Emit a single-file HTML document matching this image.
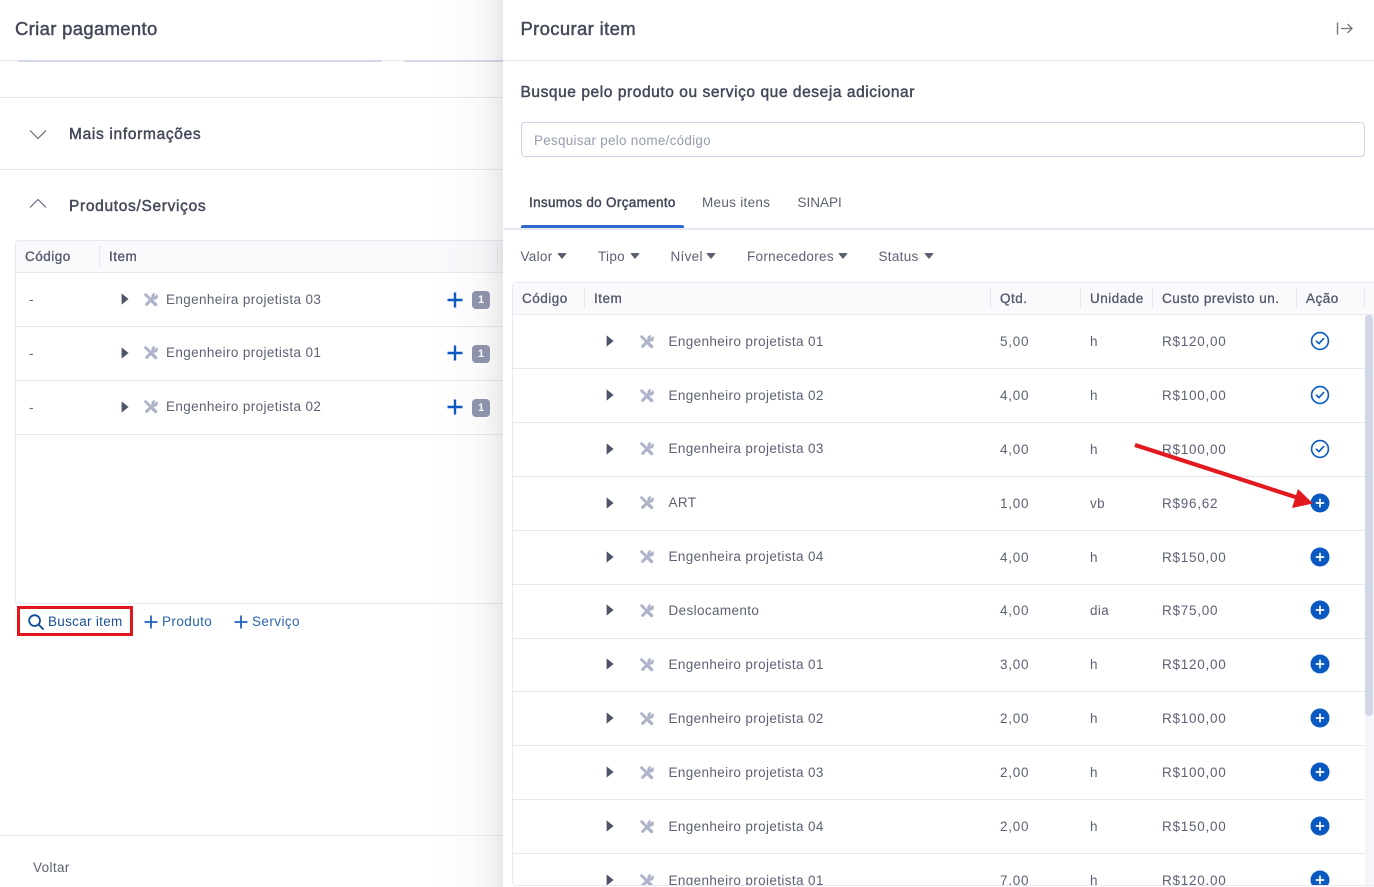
<!DOCTYPE html>
<html lang="pt-BR">
<head>
<meta charset="utf-8">
<title>Procurar item</title>
<style>
html,body{margin:0;padding:0;width:1374px;height:887px;overflow:hidden;background:#fff}
body{position:relative;font-family:"Liberation Sans",Arial,sans-serif;color:#5a6072}
.a{position:absolute}
.t{position:absolute;white-space:nowrap;line-height:16px;font-size:13.5px;letter-spacing:.37px;color:#5c6274;transform:translateY(1px)}
.n{letter-spacing:.75px}
.h{position:absolute;white-space:nowrap;line-height:16px;font-size:13.5px;letter-spacing:.5px;color:#555b6d;-webkit-text-stroke:.35px #555b6d;transform:translateY(1px)}
.m{position:absolute;white-space:nowrap;line-height:20px;color:#434859;-webkit-text-stroke:.45px #434859;transform:translateY(1px)}
.l{position:absolute;height:1px;background:#e6e9f4}
.v{position:absolute;width:1px;background:#e8eaf2}
.f{position:absolute;white-space:nowrap;line-height:16px;font-size:13.5px;letter-spacing:.3px;color:#5c6274}
.c{position:absolute;width:0;height:0;border-left:5.5px solid transparent;border-right:5.5px solid transparent;border-top:6px solid #5a6072;border-radius:2px}
svg{position:absolute;display:block}
</style>
</head>
<body>
<svg width="0" height="0" style="position:absolute">
<defs>
<symbol id="tri" viewBox="0 0 8 12"><path d="M0.6 0.4 L7.6 6 L0.6 11.6 Z" fill="#4f5568"/></symbol>
<symbol id="tool" viewBox="0 0 14 14"><g fill="none" stroke="#adb3c9" stroke-linecap="round"><path d="M2.6 11.4 L9 5" stroke-width="3"/><path d="M1.6 1.6 L5.4 5.4" stroke-width="2.8"/><path d="M7.6 7.6 L11.6 11.6" stroke-width="3.4"/></g><circle cx="10.6" cy="3.4" r="3.3" fill="#adb3c9"/><path d="M10.4 3.6 L13 1 L14.4 -.4 L11.2 -.4 Z" fill="#fff"/></symbol>
<symbol id="ok" viewBox="0 0 20 20"><circle cx="10" cy="10" r="8.4" fill="#fff" stroke="#0a59c0" stroke-width="1.6"/><path d="M6.4 10.2 L9 12.6 L13.6 7.6" fill="none" stroke="#0a59c0" stroke-width="1.6" stroke-linecap="round" stroke-linejoin="round"/></symbol>
<symbol id="add" viewBox="0 0 20 20"><circle cx="10" cy="10" r="9.5" fill="#0a59c0"/><path d="M10 6.4 V13.6 M6.4 10 H13.6" stroke="#fff" stroke-width="1.7" stroke-linecap="round"/></symbol>
<symbol id="plus" viewBox="0 0 16 16"><path d="M8 .5 V15.5 M.5 8 H15.5" stroke="#0a59c0" stroke-width="2.4" fill="none"/></symbol>
<symbol id="plus2" viewBox="0 0 14 14"><path d="M7 .5 V13.5 M.5 7 H13.5" stroke="#1f63bd" stroke-width="1.8" fill="none"/></symbol>
</defs>
</svg>

<!-- LEFT PANEL -->
<div class="m" style="left:15px;top:18px;font-size:18.5px;letter-spacing:.32px">Criar pagamento</div>
<div class="l" style="left:0;top:60px;width:503px;background:#e8eaf2"></div>
<div class="a" style="left:17px;top:60px;width:365px;height:2px;background:#d3d8e8;border-radius:0 0 4px 4px"></div>
<div class="a" style="left:404px;top:60px;width:99px;height:2px;background:#d3d8e8"></div>
<div class="l" style="left:0;top:97px;width:503px;background:#e8e9f0"></div>
<div class="l" style="left:0;top:169px;width:503px;background:#e8e9f0"></div>
<svg style="left:29px;top:129px" width="18" height="11" viewBox="0 0 18 11"><path d="M1 1.5 L9 9.5 L17 1.5" fill="none" stroke="#5c6274" stroke-width="1.1"/></svg>
<div class="m" style="left:69px;top:124px;font-size:15.5px;letter-spacing:.68px">Mais informações</div>
<svg style="left:29px;top:198px" width="18" height="11" viewBox="0 0 18 11"><path d="M1 9.5 L9 1.5 L17 9.5" fill="none" stroke="#5c6274" stroke-width="1.1"/></svg>
<div class="m" style="left:69px;top:196px;font-size:15.5px;letter-spacing:.68px">Produtos/Serviços</div>

<div class="a" style="left:15px;top:240px;width:488px;background:#fafafd;border-top:1px solid #e6e9f4;border-bottom:1px solid #e6e9f4;border-left:1px solid #e6e9f4;border-radius:4px 0 0 0;box-sizing:content-box;height:31px"></div>
<div class="a" style="left:15px;top:272px;width:1px;height:332px;background:#e6e9f4"></div>
<div class="v" style="left:99px;top:245px;height:22px"></div>
<div class="v" style="left:497px;top:245px;height:22px"></div>
<div class="h" style="left:25px;top:248px">Código</div>
<div class="h" style="left:109px;top:248px">Item</div>
<div class="l" style="left:15px;top:326px;width:488px"></div>
<div class="l" style="left:15px;top:380px;width:488px"></div>
<div class="l" style="left:15px;top:434px;width:488px"></div>
<div class="l" style="left:15px;top:603px;width:488px"></div>

<div class="t" style="left:29px;top:291px">-</div>
<svg style="left:121px;top:293px" width="8" height="12"><use href="#tri"/></svg>
<svg style="left:144px;top:293px" width="14" height="14"><use href="#tool"/></svg>
<div class="t" style="left:166px;top:291px">Engenheira projetista 03</div>
<svg style="left:446.5px;top:292px" width="16" height="16"><use href="#plus"/></svg>
<div class="a" style="left:472px;top:291px;width:18px;height:18px;background:#8e94ad;border-radius:4px;color:#fff;font-size:11px;font-weight:bold;line-height:18px;text-align:center">1</div>

<div class="t" style="left:29px;top:345px">-</div>
<svg style="left:121px;top:347px" width="8" height="12"><use href="#tri"/></svg>
<svg style="left:144px;top:346px" width="14" height="14"><use href="#tool"/></svg>
<div class="t" style="left:166px;top:344px">Engenheiro projetista 01</div>
<svg style="left:446.5px;top:345px" width="16" height="16"><use href="#plus"/></svg>
<div class="a" style="left:472px;top:345px;width:18px;height:18px;background:#8e94ad;border-radius:4px;color:#fff;font-size:11px;font-weight:bold;line-height:18px;text-align:center">1</div>

<div class="t" style="left:29px;top:399px">-</div>
<svg style="left:121px;top:401px" width="8" height="12"><use href="#tri"/></svg>
<svg style="left:144px;top:400px" width="14" height="14"><use href="#tool"/></svg>
<div class="t" style="left:166px;top:398px">Engenheiro projetista 02</div>
<svg style="left:446.5px;top:399px" width="16" height="16"><use href="#plus"/></svg>
<div class="a" style="left:472px;top:399px;width:18px;height:18px;background:#8e94ad;border-radius:4px;color:#fff;font-size:11px;font-weight:bold;line-height:18px;text-align:center">1</div>

<div class="a" style="left:17px;top:606px;width:116px;height:30px;border:3.5px solid #e2141c;box-sizing:border-box"></div>
<svg style="left:28px;top:614px" width="16" height="16" viewBox="0 0 16 16"><circle cx="6.6" cy="6.6" r="5.4" fill="none" stroke="#0f4c9c" stroke-width="1.8"/><path d="M10.6 10.6 L15 15" stroke="#0f4c9c" stroke-width="1.9" stroke-linecap="round"/></svg>
<div class="t" style="left:48px;top:613px;color:#1c4f97;letter-spacing:.3px">Buscar item</div>
<svg style="left:144px;top:615px" width="14" height="14"><use href="#plus2"/></svg>
<div class="t" style="left:162px;top:613px;color:#2b63ad;letter-spacing:.42px">Produto</div>
<svg style="left:234px;top:615px" width="14" height="14"><use href="#plus2"/></svg>
<div class="t" style="left:252px;top:613px;color:#2b63ad;letter-spacing:.42px">Serviço</div>

<div class="l" style="left:0;top:835px;width:503px;background:#ececf0"></div>
<div class="t" style="left:33px;top:859px;color:#5c6274">Voltar</div>

<!-- panel shadow -->
<div class="a" style="left:433px;top:0;width:70px;height:887px;background:linear-gradient(to right,rgba(120,120,125,0),rgba(120,120,125,.02) 40%,rgba(120,120,125,.06) 75%,rgba(120,120,125,.17))"></div>

<!-- RIGHT PANEL -->
<div class="a" style="left:503px;top:0;width:871px;height:887px;background:#fff"></div>
<div class="m" style="left:520.5px;top:18px;font-size:18.5px;letter-spacing:.34px">Procurar item</div>
<svg style="left:1336px;top:21px" width="18" height="15" viewBox="0 0 18 15"><path d="M1.5 1.5 V13.5" stroke="#75787f" stroke-width="1.4" fill="none"/><path d="M5 7.5 H16 M11.5 3 L16 7.5 L11.5 12" stroke="#75787f" stroke-width="1.3" fill="none"/></svg>
<div class="l" style="left:503px;top:60px;width:871px;background:#e6e9f4"></div>

<div class="m" style="left:520.5px;top:82px;font-size:15.5px;letter-spacing:.57px">Busque pelo produto ou serviço que deseja adicionar</div>
<div class="a" style="left:521px;top:122px;width:844px;height:35px;border:1px solid #cdd3e6;border-radius:4px;box-sizing:border-box"></div>
<div class="t" style="left:534px;top:132px;color:#959bb2;font-size:13.5px;letter-spacing:.25px">Pesquisar pelo nome/código</div>

<div class="h" style="left:529px;top:194px;color:#3f4456;-webkit-text-stroke:.4px #3f4456;letter-spacing:.32px">Insumos do Orçamento</div>
<div class="f" style="left:702px;top:195px">Meus itens</div>
<div class="f" style="left:797.5px;top:195px;letter-spacing:0">SINAPI</div>
<div class="a" style="left:503px;top:228px;width:871px;height:2px;background:#e6e9f4"></div>
<div class="a" style="left:521px;top:225px;width:163px;height:3px;background:#2e6bd0;border-radius:2px 2px 0 0"></div>

<div class="f" style="left:520.5px;top:249px">Valor</div><div class="c" style="left:557px;top:253px"></div>
<div class="f" style="left:598px;top:249px">Tipo</div><div class="c" style="left:630px;top:253px"></div>
<div class="f" style="left:670.5px;top:249px">Nível</div><div class="c" style="left:706px;top:253px"></div>
<div class="f" style="left:747px;top:249px">Fornecedores</div><div class="c" style="left:838px;top:253px"></div>
<div class="f" style="left:878.5px;top:249px">Status</div><div class="c" style="left:924px;top:253px"></div>

<!-- table -->
<div class="a" style="left:512px;top:282px;width:862px;height:604px;border:1px solid #e6e9f4;border-right:0;border-radius:4px 0 0 4px;box-sizing:border-box"></div>
<div class="a" style="left:513px;top:283px;width:861px;height:31px;background:#fafafd"></div>
<div class="l" style="left:513px;top:314px;width:861px;height:1px"></div>
<div class="v" style="left:584px;top:288px;height:21px"></div>
<div class="v" style="left:990px;top:288px;height:21px"></div>
<div class="v" style="left:1080px;top:288px;height:21px"></div>
<div class="v" style="left:1152px;top:288px;height:21px"></div>
<div class="v" style="left:1296px;top:288px;height:21px"></div>
<div class="v" style="left:1364px;top:288px;height:21px"></div>
<div class="h" style="left:522px;top:290px">Código</div>
<div class="h" style="left:594px;top:290px">Item</div>
<div class="h" style="left:1000px;top:290px">Qtd.</div>
<div class="h" style="left:1090px;top:290px">Unidade</div>
<div class="h" style="left:1162px;top:290px;letter-spacing:.48px">Custo previsto un.</div>
<div class="h" style="left:1306px;top:290px">Ação</div>

<div class="l" style="left:513px;top:368px;width:852px"></div>
<div class="l" style="left:513px;top:422px;width:852px"></div>
<div class="l" style="left:513px;top:476px;width:852px"></div>
<div class="l" style="left:513px;top:530px;width:852px"></div>
<div class="l" style="left:513px;top:584px;width:852px"></div>
<div class="l" style="left:513px;top:638px;width:852px"></div>
<div class="l" style="left:513px;top:691px;width:852px"></div>
<div class="l" style="left:513px;top:745px;width:852px"></div>
<div class="l" style="left:513px;top:799px;width:852px"></div>
<div class="l" style="left:513px;top:853px;width:852px"></div>

<!-- rows -->
<svg style="left:606px;top:335px" width="8" height="12"><use href="#tri"/></svg><svg style="left:640px;top:335px" width="14" height="14"><use href="#tool"/></svg>
<div class="t" style="left:668.5px;top:333px">Engenheiro projetista 01</div><div class="t n" style="left:1000px;top:333px">5,00</div><div class="t" style="left:1090px;top:333px">h</div><div class="t n" style="left:1162px;top:333px">R$120,00</div>
<svg style="left:1310px;top:331px" width="20" height="20"><use href="#ok"/></svg>

<svg style="left:606px;top:389px" width="8" height="12"><use href="#tri"/></svg><svg style="left:640px;top:389px" width="14" height="14"><use href="#tool"/></svg>
<div class="t" style="left:668.5px;top:387px">Engenheiro projetista 02</div><div class="t n" style="left:1000px;top:387px">4,00</div><div class="t" style="left:1090px;top:387px">h</div><div class="t n" style="left:1162px;top:387px">R$100,00</div>
<svg style="left:1310px;top:385px" width="20" height="20"><use href="#ok"/></svg>

<svg style="left:606px;top:443px" width="8" height="12"><use href="#tri"/></svg><svg style="left:640px;top:442px" width="14" height="14"><use href="#tool"/></svg>
<div class="t" style="left:668.5px;top:440px">Engenheira projetista 03</div><div class="t n" style="left:1000px;top:441px">4,00</div><div class="t" style="left:1090px;top:441px">h</div><div class="t n" style="left:1162px;top:441px">R$100,00</div>
<svg style="left:1310px;top:439px" width="20" height="20"><use href="#ok"/></svg>

<svg style="left:606px;top:497px" width="8" height="12"><use href="#tri"/></svg><svg style="left:640px;top:496px" width="14" height="14"><use href="#tool"/></svg>
<div class="t" style="left:668.5px;top:494px">ART</div><div class="t n" style="left:1000px;top:495px">1,00</div><div class="t" style="left:1090px;top:495px">vb</div><div class="t n" style="left:1162px;top:495px">R$96,62</div>
<svg style="left:1310px;top:493px" width="20" height="20"><use href="#add"/></svg>

<svg style="left:606px;top:551px" width="8" height="12"><use href="#tri"/></svg><svg style="left:640px;top:550px" width="14" height="14"><use href="#tool"/></svg>
<div class="t" style="left:668.5px;top:548px">Engenheira projetista 04</div><div class="t n" style="left:1000px;top:549px">4,00</div><div class="t" style="left:1090px;top:549px">h</div><div class="t n" style="left:1162px;top:549px">R$150,00</div>
<svg style="left:1310px;top:547px" width="20" height="20"><use href="#add"/></svg>

<svg style="left:606px;top:604px" width="8" height="12"><use href="#tri"/></svg><svg style="left:640px;top:604px" width="14" height="14"><use href="#tool"/></svg>
<div class="t" style="left:668.5px;top:602px">Deslocamento</div><div class="t n" style="left:1000px;top:602px">4,00</div><div class="t" style="left:1090px;top:602px">dia</div><div class="t n" style="left:1162px;top:602px">R$75,00</div>
<svg style="left:1310px;top:600px" width="20" height="20"><use href="#add"/></svg>

<svg style="left:606px;top:658px" width="8" height="12"><use href="#tri"/></svg><svg style="left:640px;top:658px" width="14" height="14"><use href="#tool"/></svg>
<div class="t" style="left:668.5px;top:656px">Engenheiro projetista 01</div><div class="t n" style="left:1000px;top:656px">3,00</div><div class="t" style="left:1090px;top:656px">h</div><div class="t n" style="left:1162px;top:656px">R$120,00</div>
<svg style="left:1310px;top:654px" width="20" height="20"><use href="#add"/></svg>

<svg style="left:606px;top:712px" width="8" height="12"><use href="#tri"/></svg><svg style="left:640px;top:712px" width="14" height="14"><use href="#tool"/></svg>
<div class="t" style="left:668.5px;top:710px">Engenheiro projetista 02</div><div class="t n" style="left:1000px;top:710px">2,00</div><div class="t" style="left:1090px;top:710px">h</div><div class="t n" style="left:1162px;top:710px">R$100,00</div>
<svg style="left:1310px;top:708px" width="20" height="20"><use href="#add"/></svg>

<svg style="left:606px;top:766px" width="8" height="12"><use href="#tri"/></svg><svg style="left:640px;top:766px" width="14" height="14"><use href="#tool"/></svg>
<div class="t" style="left:668.5px;top:764px">Engenheiro projetista 03</div><div class="t n" style="left:1000px;top:764px">2,00</div><div class="t" style="left:1090px;top:764px">h</div><div class="t n" style="left:1162px;top:764px">R$100,00</div>
<svg style="left:1310px;top:762px" width="20" height="20"><use href="#add"/></svg>

<svg style="left:606px;top:820px" width="8" height="12"><use href="#tri"/></svg><svg style="left:640px;top:820px" width="14" height="14"><use href="#tool"/></svg>
<div class="t" style="left:668.5px;top:818px">Engenheiro projetista 04</div><div class="t n" style="left:1000px;top:818px">2,00</div><div class="t" style="left:1090px;top:818px">h</div><div class="t n" style="left:1162px;top:818px">R$150,00</div>
<svg style="left:1310px;top:816px" width="20" height="20"><use href="#add"/></svg>

<div class="a" style="left:513px;top:854px;width:852px;height:31px;overflow:hidden">
<svg style="left:93px;top:20px" width="8" height="12"><use href="#tri"/></svg><svg style="left:127px;top:20px" width="14" height="14"><use href="#tool"/></svg>
<div class="t" style="left:155.5px;top:18px">Engenheiro projetista 01</div><div class="t n" style="left:487px;top:18px">7,00</div><div class="t" style="left:577px;top:18px">h</div><div class="t n" style="left:649px;top:18px">R$120,00</div>
<svg style="left:797px;top:16px" width="20" height="20"><use href="#add"/></svg>
</div>

<!-- scrollbar -->
<div class="a" style="left:1365px;top:315px;width:9px;height:570px;background:#f5f6fb"></div>
<div class="a" style="left:1365px;top:315px;width:8px;height:401px;background:#d0d5e8;border-radius:4px"></div>

<!-- red arrow -->
<svg style="left:1125px;top:435px" width="200" height="85" viewBox="1125 435 200 85"><path d="M1135 445 L1300 498.5" stroke="#e2191e" stroke-width="4.2" fill="none"/><path d="M1313 503.5 L1298 489 L1292 508 Z" fill="#e2191e"/></svg>
</body>
</html>
